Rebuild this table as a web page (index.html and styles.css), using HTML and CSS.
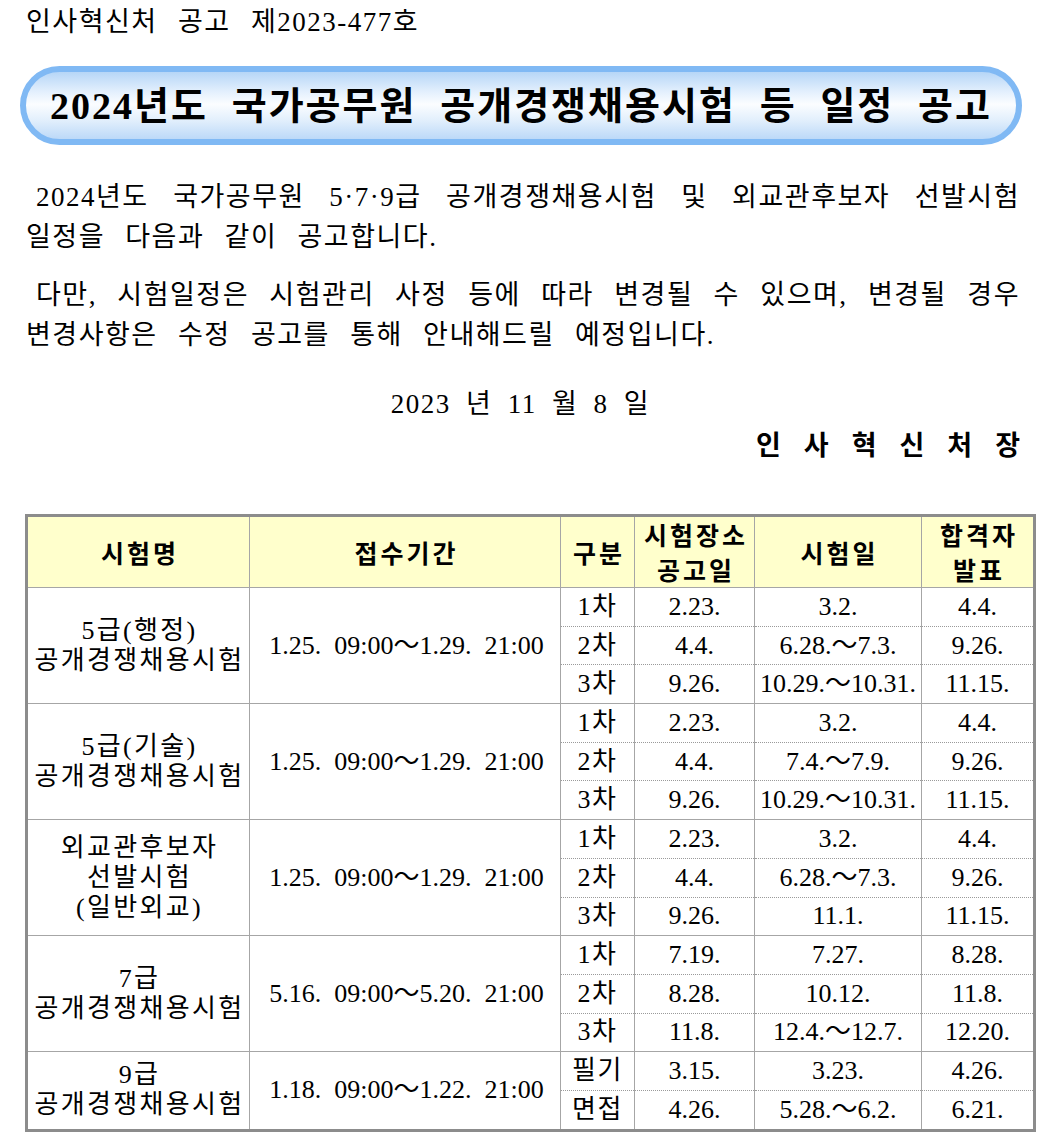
FILE: index.html
```html
<!DOCTYPE html>
<html lang="ko">
<head>
<meta charset="utf-8">
<title>2024년도 국가공무원 공개경쟁채용시험 등 일정 공고</title>
<link rel="stylesheet" href="styles.css">
</head>
<body>
<div class="page">
  <div class="notice-no">인사혁신처 공고 제2023-477호</div>

  <div class="banner">
    <h1 class="title">2024년도 국가공무원 공개경쟁채용시험 등 일정 공고</h1>
  </div>

  <p class="para"><span class="jl">2024년도 국가공무원 5·7·9급 공개경쟁채용시험 및 외교관후보자 선발시험</span><span class="ln">일정을 다음과 같이 공고합니다.</span></p>
  <p class="para"><span class="jl">다만, 시험일정은 시험관리 사정 등에 따라 변경될 수 있으며, 변경될 경우</span><span class="ln">변경사항은 수정 공고를 통해 안내해드릴 예정입니다.</span></p>

  <div class="date">2023 년 11 월 8 일</div>
  <div class="sign">인사혁신처장</div>

  <table class="sched">
    <colgroup>
      <col class="c1"><col class="c2"><col class="c3"><col class="c4"><col class="c5"><col class="c6">
    </colgroup>
    <thead>
      <tr>
        <th>시험명</th>
        <th>접수기간</th>
        <th>구분</th>
        <th>시험장소<br>공고일</th>
        <th>시험일</th>
        <th>합격자<br>발표</th>
      </tr>
    </thead>
    <tbody>
      <tr class="grp">
        <td rowspan="3" class="name">5급(행정)<br>공개경쟁채용시험</td>
        <td rowspan="3" class="period">1.25.&nbsp; 09:00～1.29.&nbsp; 21:00</td>
        <td class="kind">1차</td><td>2.23.</td><td>3.2.</td><td>4.4.</td>
      </tr>
      <tr><td class="kind">2차</td><td>4.4.</td><td>6.28.～7.3.</td><td>9.26.</td></tr>
      <tr><td class="kind">3차</td><td>9.26.</td><td>10.29.～10.31.</td><td>11.15.</td></tr>

      <tr class="grp">
        <td rowspan="3" class="name">5급(기술)<br>공개경쟁채용시험</td>
        <td rowspan="3" class="period">1.25.&nbsp; 09:00～1.29.&nbsp; 21:00</td>
        <td class="kind">1차</td><td>2.23.</td><td>3.2.</td><td>4.4.</td>
      </tr>
      <tr><td class="kind">2차</td><td>4.4.</td><td>7.4.～7.9.</td><td>9.26.</td></tr>
      <tr><td class="kind">3차</td><td>9.26.</td><td>10.29.～10.31.</td><td>11.15.</td></tr>

      <tr class="grp">
        <td rowspan="3" class="name">외교관후보자<br>선발시험<br>(일반외교)</td>
        <td rowspan="3" class="period">1.25.&nbsp; 09:00～1.29.&nbsp; 21:00</td>
        <td class="kind">1차</td><td>2.23.</td><td>3.2.</td><td>4.4.</td>
      </tr>
      <tr><td class="kind">2차</td><td>4.4.</td><td>6.28.～7.3.</td><td>9.26.</td></tr>
      <tr><td class="kind">3차</td><td>9.26.</td><td>11.1.</td><td>11.15.</td></tr>

      <tr class="grp">
        <td rowspan="3" class="name">7급<br>공개경쟁채용시험</td>
        <td rowspan="3" class="period">5.16.&nbsp; 09:00～5.20.&nbsp; 21:00</td>
        <td class="kind">1차</td><td>7.19.</td><td>7.27.</td><td>8.28.</td>
      </tr>
      <tr><td class="kind">2차</td><td>8.28.</td><td>10.12.</td><td>11.8.</td></tr>
      <tr><td class="kind">3차</td><td>11.8.</td><td>12.4.～12.7.</td><td>12.20.</td></tr>

      <tr class="grp">
        <td rowspan="2" class="name">9급<br>공개경쟁채용시험</td>
        <td rowspan="2" class="period">1.18.&nbsp; 09:00～1.22.&nbsp; 21:00</td>
        <td class="kind">필기</td><td>3.15.</td><td>3.23.</td><td>4.26.</td>
      </tr>
      <tr><td class="kind">면접</td><td>4.26.</td><td>5.28.～6.2.</td><td>6.21.</td></tr>
    </tbody>
  </table>
</div>
</body>
</html>
```

FILE: styles.css
```css
html, body {
  margin: 0;
  padding: 0;
  background: #ffffff;
}

body {
  font-family: "Liberation Serif", "Noto Sans CJK KR", serif;
  color: #000000;
}

.page {
  padding: 4px 8px 0 25px;
}

.notice-no {
  font-size: 27px;
  line-height: 36px;
  padding-left: 1px;
  letter-spacing: 1.5px;
  word-spacing: 12px;
}

.banner {
  margin: 26px 11px 0 -5px;
  height: 67px;
  border: 6px solid #80b9f4;
  border-radius: 45px;
  background: linear-gradient(to bottom, #b6d6f7 0%, #e4f0fd 30%, #fbfdff 48%, #e2effc 72%, #bcd9f8 100%);
  display: flex;
  align-items: center;
  padding: 0 24px 0 24px;
}

.title {
  margin: 0;
  width: 100%;
  font-family: "Liberation Serif", "Noto Sans CJK KR", serif;
  font-weight: 700;
  font-size: 38px;
  line-height: 44px;
  letter-spacing: 2px;
  text-align: justify;
  text-align-last: justify;
}

.para {
  margin: 32px 13px 0 1px;
  font-size: 27px;
  line-height: 40px;
  letter-spacing: 1.5px;
}

.para + .para {
  margin-top: 18px;
}

.jl {
  display: block;
  padding-left: 10px;
  text-align: justify;
  text-align-last: justify;
}

.ln {
  display: block;
  word-spacing: 12px;
}

.date {
  margin-top: 29px;
  text-align: center;
  font-size: 27px;
  line-height: 40px;
  padding-right: 17px;
  letter-spacing: 1.5px;
  word-spacing: 7px;
}

.sign {
  text-align: right;
  font-family: "Noto Sans CJK KR", sans-serif;
  font-weight: 700;
  font-size: 27px;
  line-height: 40px;
  letter-spacing: 23px;
  margin-right: -10px;
}

.sched {
  margin-top: 50px;
  width: 1008px;
  border-collapse: collapse;
  table-layout: fixed;
  border: 3px solid #8c8c8c;
  font-size: 26px;
}

.c1 { width: 223px; }
.c2 { width: 311px; }
.c3 { width: 74px; }
.c4 { width: 120px; }
.c5 { width: 167px; }
.c6 { width: 113px; }

.sched th {
  background: #ffffcc;
  font-family: "Noto Sans CJK KR", sans-serif;
  font-weight: 700;
  font-size: 25px;
  line-height: 35px;
  letter-spacing: 3px;
  height: 69px;
  padding: 0 0 0 3px;
  border: 1px solid #a6a6a6;
  text-align: center;
  vertical-align: middle;
}

.sched td {
  border-left: 1px solid #a6a6a6;
  border-right: 1px solid #a6a6a6;
  border-top: 1px dotted #9a9a9a;
  height: 37.7px;
  padding: 0;
  text-align: center;
  vertical-align: middle;
  line-height: 30px;
  white-space: nowrap;
}

.sched td.name {
  letter-spacing: 2.3px;
  padding-left: 2px;
}

.sched td.kind {
  letter-spacing: 1.5px;
}

.sched tr.grp td {
  border-top: 1px solid #a6a6a6;
}

.sched td.name,
.sched td.period {
  border-top: 1px solid #a6a6a6;
  border-bottom: 1px solid #a6a6a6;
}

.sched td.period {
  padding-left: 3px;
}
```
